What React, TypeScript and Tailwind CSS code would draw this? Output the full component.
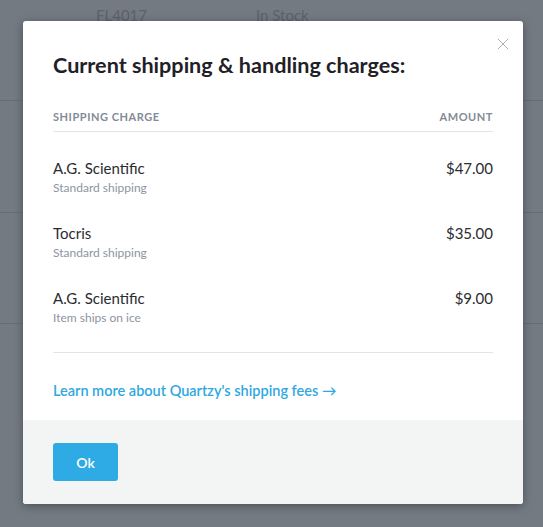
import { X } from "lucide-react";

const charges = [
    { vendor: "A.G. Scientific", note: "Standard shipping", amount: "$47.00" },
    { vendor: "Tocris", note: "Standard shipping", amount: "$35.00" },
    { vendor: "A.G. Scientific", note: "Item ships on ice", amount: "$9.00" },
];

function ChargeRow({ vendor, note, amount }: { vendor: string; note: string; amount: string }) {
    return (
        <div className="flex flex-row items-start justify-between">
            <div className="flex flex-col gap-[2px]">
                <p className="text-[15px] leading-5 text-[#2a2c30]">{vendor}</p>
                <p className="text-[12px] leading-4 text-[#8e94a0]">{note}</p>
            </div>
            <p className="text-[15px] leading-5 text-[#2a2c30]">{amount}</p>
        </div>
    );
}

function Background() {
    return (
        <div className="flex flex-col w-full h-[527px] bg-[#737a82]">
            <div className="h-[101px] border-b border-[#686e76] flex flex-row pt-[4px] text-[15px] text-[#5c6269]">
                <span className="ml-[96px]">FL4017</span>
                <span className="ml-[109px]">In Stock</span>
            </div>
            <div className="h-[112px] border-b border-[#686e76]" />
            <div className="h-[111px] border-b border-[#686e76]" />
        </div>
    );
}

export default function App() {
    return (
        <div className="relative w-[543px] h-[527px] overflow-hidden font-['Lato','Noto_Sans',sans-serif]">
            <Background />
            <div className="absolute inset-0 flex flex-row justify-start pl-[23px] pt-[21px]">
                <div className="relative w-[500px] h-[483px] bg-white rounded-[3px] shadow-[0_2px_10px_rgba(0,0,0,0.35)] flex flex-col overflow-hidden">
                    <button className="absolute top-[13px] right-[10px] text-[#9aa0aa]">
                        <X size={20} strokeWidth={1} />
                    </button>
                    <div className="flex flex-col px-[30px] pt-[30px]">
                        <h2 className="text-[21.6px] leading-7 font-bold text-[#1f2126]">
                            Current shipping &amp; handling charges:
                        </h2>
                        <div className="flex flex-row justify-between mt-[30px] pb-[6px] border-b border-[#e2e3e5] text-[11px] leading-4 font-bold text-[#848a96] uppercase tracking-[0.05em]">
                            <span>Shipping charge</span>
                            <span>Amount</span>
                        </div>
                        <div className="flex flex-col gap-[27px] py-[26px] border-b border-[#e2e3e5]">
                            {charges.map((c, i) => (
                                <ChargeRow key={i} vendor={c.vendor} note={c.note} amount={c.amount} />
                            ))}
                        </div>
                        <a className="mt-[28px] text-[14.5px] leading-5 font-semibold text-[#2ea8e1]">
                            Learn more about Quartzy's shipping fees →
                        </a>
                    </div>
                    <div className="mt-auto h-[84px] bg-[#f3f4f4] flex flex-row items-center px-[30px]">
                        <button className="w-[65px] h-[38px] rounded-[3px] bg-[#2eabe4] text-white text-[14px] font-semibold">
                            Ok
                        </button>
                    </div>
                </div>
            </div>
        </div>
    );
}
